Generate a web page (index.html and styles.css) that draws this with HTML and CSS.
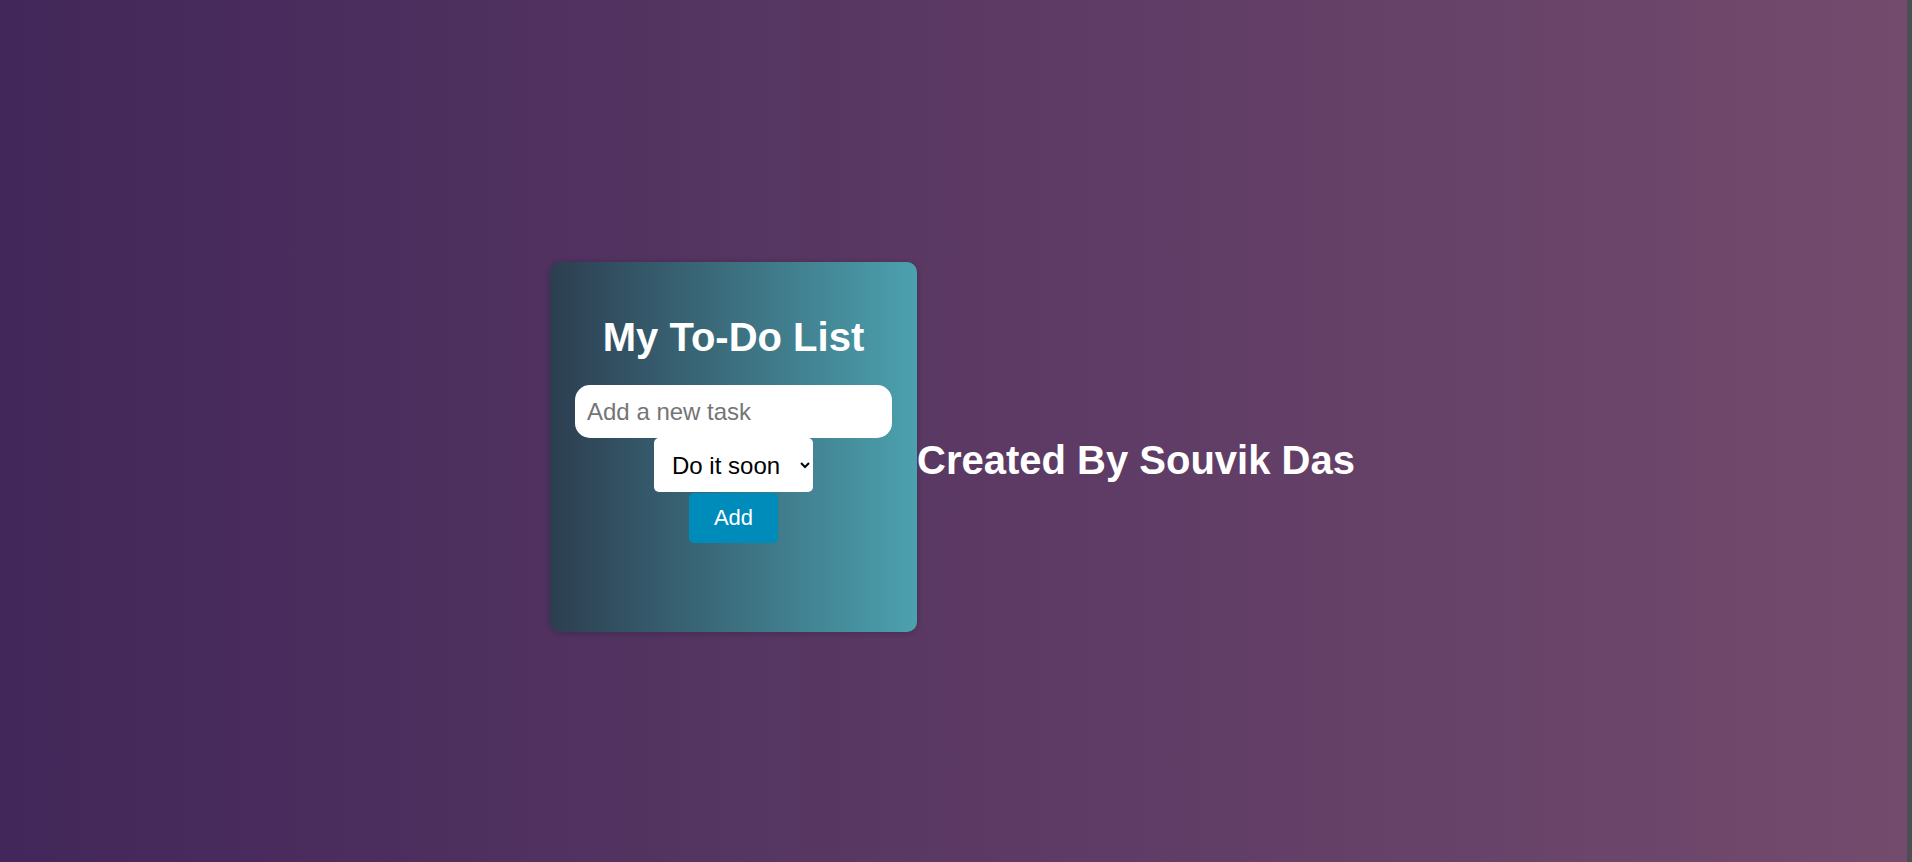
FILE: index.html
```html
<!DOCTYPE html>
<html lang="en">
<head>
<meta charset="UTF-8">
<title>My To-Do List</title>
<link rel="stylesheet" href="styles.css">
</head>
<body>
  <div class="card">
    <h1 class="card-title">My To-Do List</h1>
    <div class="form">
      <input class="task-input" type="text" placeholder="Add a new task">
      <select class="priority">
        <option>Do it soon</option>
        <option>Do it now</option>
        <option>Do it later</option>
      </select>
      <button class="add-btn">Add</button>
    </div>
    <ul class="task-list"></ul>
  </div>
  <h1 class="credit">Created By Souvik Das</h1>
</body>
</html>
```
FILE: styles.css
```css
html, body {
  height: 100%;
}
body {
  margin: 0;
  box-sizing: border-box;
  padding: 32px 7px 0 0;
  background: linear-gradient(to right, #42275a, #734b6d);
  font-family: "Liberation Sans", Arial, sans-serif;
  display: flex;
  justify-content: center;
  align-items: center;
  overflow: hidden;
}
body::after {
  content: "";
  position: fixed;
  top: 0;
  right: 0;
  width: 5px;
  height: 100%;
  background: #4b4f53;
}
.card {
  box-sizing: border-box;
  width: 367px;
  height: 370px;
  padding: 0 25px 25px;
  border-radius: 10px;
  background: linear-gradient(to right, #2c3e50, #4ca1af);
  box-shadow: 0 1px 6px rgba(0, 0, 0, 0.2);
  text-align: center;
  display: flex;
  flex-direction: column;
}
.card-title {
  margin: 52px 0 25px;
  font-size: 40px;
  line-height: 46px;
  font-weight: bold;
  color: #fff;
}
.form {
  display: flex;
  flex-direction: column;
  align-items: center;
}
.task-input {
  box-sizing: border-box;
  width: 100%;
  height: 53px;
  padding: 0 12px;
  border: none;
  border-radius: 15px;
  font-family: "Liberation Sans", Arial, sans-serif;
  font-size: 24px;
  color: #000;
  background: #fff;
  outline: none;
}
.task-input::placeholder {
  color: #757575;
}
.priority {
  box-sizing: border-box;
  width: 159px;
  height: 54px;
  padding: 0 8px 0 14px;
  border: none;
  border-radius: 5px;
  background: #fff;
  color: #000;
  font-family: "Liberation Sans", Arial, sans-serif;
  font-size: 24px;
}
.add-btn {
  box-sizing: border-box;
  margin-top: 1px;
  height: 50px;
  padding: 0 25px;
  border: none;
  border-radius: 5px;
  background: #008cba;
  color: #fff;
  font-family: "Liberation Sans", Arial, sans-serif;
  font-size: 22px;
}
.task-list {
  margin: 0;
  padding: 0;
  list-style: none;
}
.credit {
  margin: 26px 0 0;
  font-size: 40px;
  line-height: 46px;
  font-weight: bold;
  color: #fff;
}
```
